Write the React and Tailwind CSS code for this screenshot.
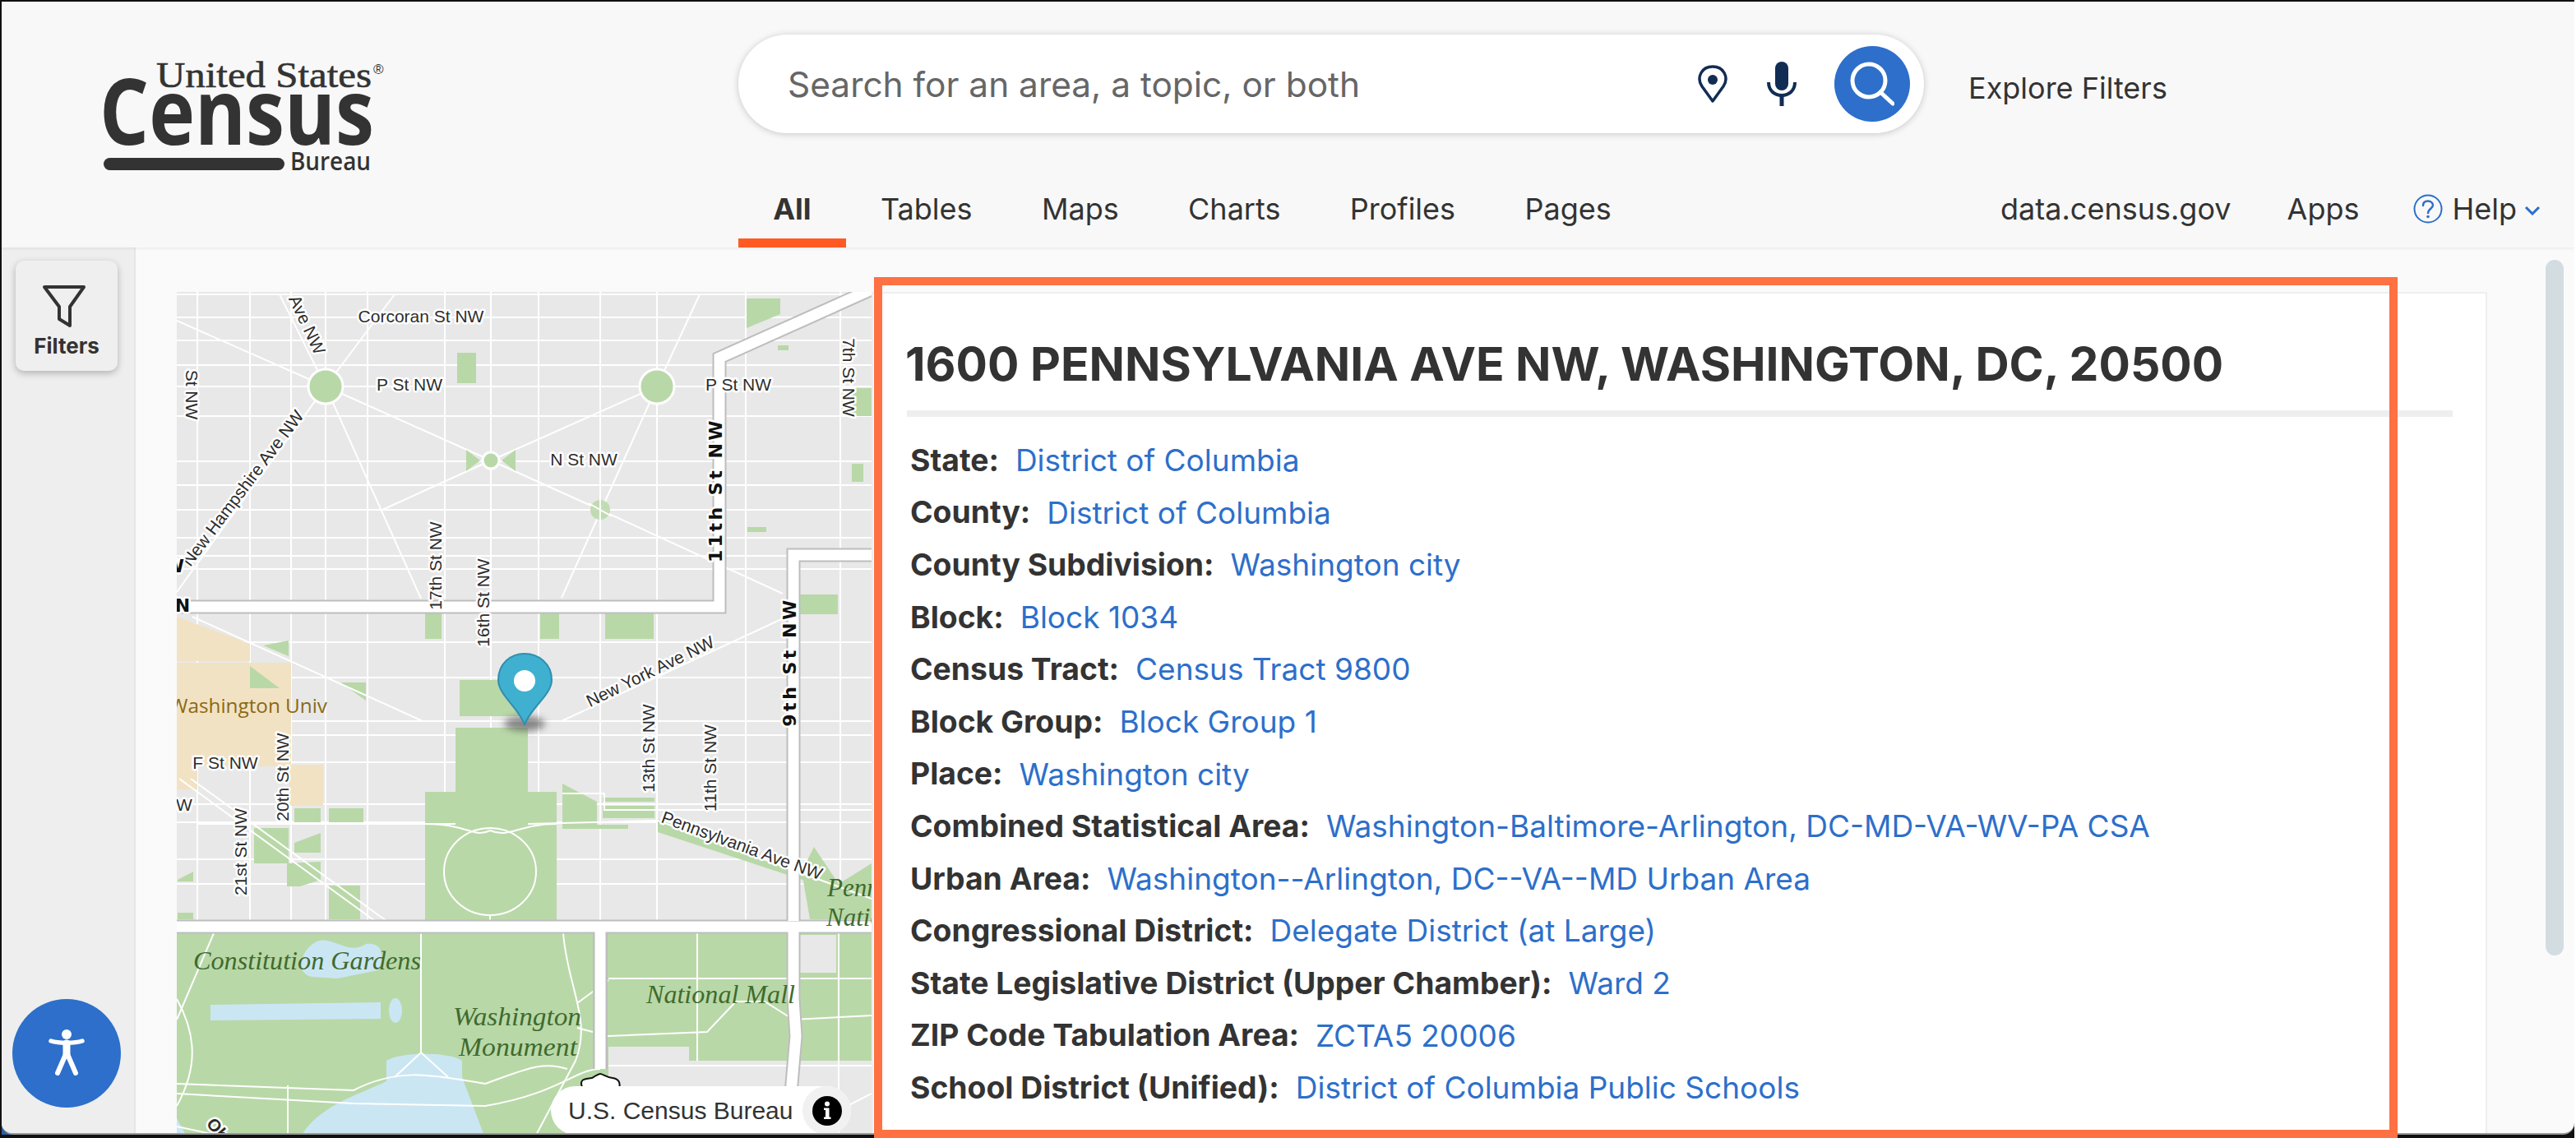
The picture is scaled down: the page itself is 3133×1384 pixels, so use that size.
import React from 'react'

const tabs = ['All', 'Tables', 'Maps', 'Charts', 'Profiles', 'Pages']

const geoRows = [
    ['State:', 'District of Columbia'],
    ['County:', 'District of Columbia'],
    ['County Subdivision:', 'Washington city'],
    ['Block:', 'Block 1034'],
    ['Census Tract:', 'Census Tract 9800'],
    ['Block Group:', 'Block Group 1'],
    ['Place:', 'Washington city'],
    ['Combined Statistical Area:', 'Washington-Baltimore-Arlington, DC-MD-VA-WV-PA CSA'],
    ['Urban Area:', 'Washington--Arlington, DC--VA--MD Urban Area'],
    ['Congressional District:', 'Delegate District (at Large)'],
    ['State Legislative District (Upper Chamber):', 'Ward 2'],
    ['ZIP Code Tabulation Area:', 'ZCTA5 20006'],
    ['School District (Unified):', 'District of Columbia Public Schools'],
]

const Logo = () => (
    <svg width="360" height="145" viewBox="120 70 360 145" className="block">
        <text x="190" y="106" fontFamily="Liberation Serif" fontSize="45" fill="#333" stroke="#333" strokeWidth="0.6" textLength="262" lengthAdjust="spacingAndGlyphs">United States</text>
        <text x="454" y="90" fontFamily="Liberation Sans" fontSize="17" fill="#333">®</text>
        <text x="121" y="176" fontFamily="Open Sans" fontWeight="700" fontSize="112" fill="#333" textLength="334" lengthAdjust="spacingAndGlyphs">Census</text>
        <rect x="126" y="192" width="220" height="15" rx="7.5" fill="#333" />
        <text x="353" y="207" fontFamily="Open Sans" fontWeight="600" fontSize="30" fill="#333" textLength="98" lengthAdjust="spacingAndGlyphs">Bureau</text>
    </svg>
)

const hLines = [358, 386, 414, 444, 470, 506, 561, 590, 620, 654, 676, 692, 781, 824, 877, 894, 927, 978, 1000, 1045, 1075]
const vLines = [240, 304, 354, 396, 447, 541, 597, 655, 730, 799, 907, 1022]

const thinRoads = [
    'M215 390L396 470L597 560L730 620L952 722',
    'M799 470L597 560L465 620',
    'M396 470L512 728',
    'M799 470L683 727',
    'M799 470L851 358',
    'M396 470L480 358',
    'M396 470L340 358',
    'M396 470L215 720',
    'M234 750L514 877H683L957 750',
    'M218 947L456 1120',
    'M232 947L470 1120',
    'M642 1002L800 998L1060 1093',
    'M240 1002H554',
    'M517 1002C570 1002 576 1020 596 1010C620 1020 630 1002 677 1002',
    'M684 965H735V985H1060',
    'M215 1215C240 1260 240 1300 215 1345',
    'M215 1318L430 1326C480 1300 520 1305 590 1318C640 1300 660 1290 690 1300',
    'M260 1135L215 1240',
    'M215 1330L430 1342L590 1345C680 1330 700 1300 730 1300',
    'M512 1135V1280L480 1310',
    'M512 1280L545 1310',
    'M350 1320V1384',
    'M215 1370L280 1384',
    'M685 1135C690 1200 720 1240 700 1290L650 1384',
    'M740 1192L702 1220',
    'M702 1250L740 1260',
    'M740 1190H1060',
    'M740 1260L860 1255L895 1218H930L965 1240L1060 1235',
    'M848 1135V1290',
    'M740 1296H1060',
    'M1020 1135V1384',
    'M955 1384L1060 1330',
]

const mapLabels = [
    ['Corcoran St NW', 512, 392, 0],
    ['Ave NW', 367, 398, 65],
    ['P St NW', 498, 475, 0],
    ['P St NW', 898, 475, 0],
    ['N St NW', 710, 566, 0],
    ['7th St NW', 1025, 459, 90],
    ['St NW', 226, 480, 90],
    ['New Hampshire Ave NW', 301, 598, -53],
    ['New York Ave NW', 794, 823, -26],
    ['17th St NW', 537, 688, -90],
    ['16th St NW', 595, 733, -90],
    ['13th St NW', 796, 910, -90],
    ['11th St NW', 871, 934, -90],
    ['F St NW', 274, 935, 0],
    ['20th St NW', 351, 945, -90],
    ['21st St NW', 300, 1036, -90],
    ['Pennsylvania Ave NW', 900, 1035, 20],
]

const highways = [
    'M215 738H875V435L1100 334',
    'M1060 675H965V1120',
    'M215 1127H1060',
    'M965 1127V1215L968 1260L962 1330',
]

const MapPanel = () => (
    <svg width="845" height="1029" viewBox="215 355 845 1029" className="block">
        <defs>
            <filter id="pin-shadow" x="-50%" y="-100%" width="200%" height="300%">
                <feGaussianBlur stdDeviation="4" />
            </filter>
        </defs>
        <rect x="215" y="355" width="845" height="1029" fill="#e8e8e8" />
        {/* street grid goes under the parks */}
        <g stroke="#fff" strokeWidth="2" fill="none">
            {hLines.map((y) => (
                <path key={y} d={`M215 ${y}H1060`} />
            ))}
            {vLines.map((x) => (
                <path key={x} d={`M${x} 355V1120`} />
            ))}
        </g>
        {/* campus */}
        <path d="M215 750L304 783V804H215Z" fill="#f2e2c4" />
        <path d="M215 806H354V930H393V980H352V932H240V960H215Z" fill="#f2e2c4" />
        {/* parks */}
        <g fill="#b9d8a8">
            <path d="M908 363H949V382L908 399Z" />
            <rect x="556" y="429" width="23" height="37" />
            <rect x="517" y="745" width="20" height="32" />
            <rect x="657" y="745" width="23" height="32" />
            <rect x="736" y="745" width="59" height="32" />
            <rect x="972" y="723" width="47" height="24" />
            <rect x="559" y="827" width="80" height="44" />
            <rect x="1035" y="472" width="25" height="34" />
            <rect x="1036" y="564" width="14" height="22" />
            <rect x="909" y="641" width="23" height="6" />
            <rect x="946" y="420" width="13" height="6" />
            <path d="M554 885H642V963H677V1120H517V963H554Z" />
            <path d="M684 953L726 975V1003H684Z" />
            <rect x="733" y="970" width="63" height="5" />
            <rect x="733" y="980" width="63" height="15" />
            <rect x="684" y="1003" width="80" height="5" />
            <rect x="358" y="983" width="32" height="17" />
            <rect x="400" y="983" width="42" height="17" />
            <path d="M309 1007H351V1050H309Z" />
            <path d="M358 1037V1025L390 1013V1037Z" />
            <path d="M349 1050L390 1048V1070L365 1078H349Z" />
            <rect x="400" y="1077" width="38" height="41" />
            <rect x="216" y="1110" width="19" height="8" />
            <path d="M216 1070L235 1060V1072H216Z" />
            <path d="M320 785L351 779V798Z" />
            <path d="M304 810L340 837H304Z" />
            <path d="M414 830H445V852Z" />
            <path d="M800 996L1000 1070L985 1073L800 1012Z" />
            <path d="M975 1060L990 1030L1000 1045L1020 1075L1060 1050V1118H985Z" />
            <path d="M215 1135H1060V1384H215Z" />
        </g>
        {/* gray blocks south of the mall */}
        <g fill="#e8e8e8">
            <rect x="972" y="1137" width="45" height="46" />
            <path d="M740 1273H838V1290H1060V1384H740Z" />
        </g>
        {/* water */}
        <g fill="#cbe6f3">
            <path d="M378 1150C400 1130 420 1165 445 1148C470 1145 465 1170 460 1180L410 1190L380 1188C360 1185 365 1160 378 1150Z" />
            <path d="M256 1222L463 1219V1239L256 1241Z" />
            <ellipse cx="481" cy="1229" rx="8" ry="15" />
            <path d="M470 1290C490 1278 550 1280 562 1290V1310L590 1384H365C385 1345 440 1330 470 1315Z" />
            <path d="M215 1360L228 1384H215Z" />
        </g>
        {/* diagonal avenues and paths */}
        <g stroke="#fff" strokeWidth="2" fill="none">
            {thinRoads.map((d) => (
                <path key={d} d={d} />
            ))}
            <ellipse cx="596" cy="1060" rx="56" ry="53" />
            <path d="M596 1113V1120" />
        </g>
        {/* circles */}
        <g fill="#b9d8a8" stroke="#fff" strokeWidth="3">
            <circle cx="396" cy="470" r="21" />
            <circle cx="799" cy="470" r="21" />
            <circle cx="597" cy="560" r="10" />
        </g>
        <path d="M567 547V573L584 560ZM627 547V573L610 560Z" fill="#b9d8a8" />
        <circle cx="730" cy="620" r="12" fill="#b9d8a8" fillOpacity="0.85" />
        <path d="M716 612L744 628M730 608V632" stroke="#fff" strokeWidth="2" />
        {/* highways */}
        <g fill="none" stroke="#bdbdbd" strokeWidth="17">
            {highways.map((d) => (
                <path key={d} d={d} />
            ))}
        </g>
        <path d="M730 1127V1300" stroke="#bdbdbd" strokeWidth="18" fill="none" />
        <g fill="none" stroke="#fff" strokeWidth="13">
            {highways.map((d) => (
                <path key={d} d={d} />
            ))}
            <path d="M730 1127V1300" />
        </g>
        {/* road labels */}
        <g fontFamily="Liberation Sans" fontSize="21" fill="#2d2d2d" stroke="#fff" strokeWidth="5" paintOrder="stroke" textAnchor="middle" strokeLinejoin="round">
            {mapLabels.map(([text, x, y, rot]) => (
                <text key={text + x} x={x} y={y} transform={`rotate(${rot} ${x} ${y})`}>
                    {text}
                </text>
            ))}
            <text x="224" y="986">W</text>
            <text x="250" y="1367" fontWeight="700" transform="rotate(50 250 1367)" textAnchor="start">Ohio Dr</text>
        </g>
        <g fontFamily="DejaVu Sans" fontWeight="700" fill="#111" stroke="#fff" strokeWidth="5" paintOrder="stroke" textAnchor="middle" strokeLinejoin="round" fontSize="22">
            <text x="878" y="596" letterSpacing="3.5" transform="rotate(-90 878 596)">11th St NW</text>
            <text x="968" y="805" letterSpacing="3.5" transform="rotate(-90 968 805)">9th St NW</text>
            <text x="222" y="744">N</text>
            <text x="212" y="696">W</text>
        </g>
        <text x="206" y="867" fontFamily="Open Sans" fontSize="24" fill="#8a6914" textLength="192" lengthAdjust="spacingAndGlyphs">Washington Univ</text>
        {/* park labels */}
        <g fontFamily="Liberation Serif" fontStyle="italic" fill="#3f6b2d" fontSize="31">
            <text x="235" y="1179" textLength="277" lengthAdjust="spacingAndGlyphs">Constitution Gardens</text>
            <text x="551" y="1247" textLength="156" lengthAdjust="spacingAndGlyphs">Washington</text>
            <text x="558" y="1284" textLength="144" lengthAdjust="spacingAndGlyphs">Monument</text>
            <text x="786" y="1220" textLength="181" lengthAdjust="spacingAndGlyphs">National Mall</text>
            <text x="1006" y="1090">Penn</text>
            <text x="1005" y="1126">Natio</text>
        </g>
        {/* route shield */}
        <path d="M708 1322C704 1312 712 1312 720 1311C725 1308 728 1306 730 1306C733 1306 737 1310 745 1311C752 1312 755 1316 753 1324V1330H708Z" fill="#fff" stroke="#111" strokeWidth="2" />
        {/* pin */}
        <ellipse cx="638" cy="880" rx="25" ry="9" fill="#444" opacity="0.6" filter="url(#pin-shadow)" />
        <path d="M638 881C630 860 606 845 606 827C606 807 621 795 638 795C655 795 671 807 671 827C671 845 646 860 638 881Z" fill="#40b0d0" stroke="#2f8fae" strokeWidth="2" />
        <ellipse cx="638" cy="828" rx="13" ry="13" fill="#fff" />
    </svg>
)

const App = () => {
    return (
        <div className="relative w-[3133px] h-[1384px] overflow-hidden bg-[#111] pt-[2px] pb-[4px] pl-[2px] border-r-[2px] border-white font-['Inter',sans-serif] text-[#333]">
            {/* dock peeking behind the window corner */}
            <div className="absolute bottom-[4px] left-[2px] h-[22px] w-[44px] bg-[#2d5f9e]" />
            <div className="relative flex flex-col h-full rounded-b-[14px] overflow-hidden border-b-[2px] border-[#999] bg-[#fafafa]">
                {/* header */}
                <header className="relative z-10 flex h-[299px] shrink-0 bg-[#f8f8f8] shadow-[0_1px_4px_rgba(0,0,0,0.08)]">
                    <div className="w-[896px] shrink-0 pl-[118px] pt-[68px]">
                        <Logo />
                    </div>
                    <div className="flex flex-1 flex-col">
                        <div className="flex items-center pt-[40px]">
                            <div className="flex h-[120px] w-[1442px] items-center rounded-full bg-white pl-[60px] pr-[17px] shadow-[0_1px_8px_rgba(0,0,0,0.2)]">
                                <span className="mt-[1px] flex-1 text-[42.4px] text-[#666]">Search for an area, a topic, or both</span>
                                <svg width="36" height="46" viewBox="0 0 36 46" fill="none" stroke="#122d54" strokeWidth="3.5" className="mr-[48px]">
                                    <path d="M18 44L5 26C1 20 1.5 14 4 9.500C7 4 12 2 18 2C24 2 29 4 32 9.500C34.500 14 35 20 31 26Z" strokeLinejoin="round" />
                                    <circle cx="18" cy="18" r="6" fill="#122d54" stroke="none" />
                                </svg>
                                <svg width="36" height="54" viewBox="0 0 36 54" fill="none" className="mr-[46px]">
                                    <rect x="10" y="0" width="16" height="35" rx="8" fill="#122d54" />
                                    <path d="M2 25C2 35 9 41 18 41C27 41 34 35 34 25" stroke="#122d54" strokeWidth="4" />
                                    <rect x="15.500" y="41" width="5" height="13" fill="#122d54" />
                                </svg>
                                <div className="flex h-[92px] w-[92px] items-center justify-center rounded-full bg-[#2d6fca]">
                                    <svg width="54" height="54" viewBox="0 0 54 54" fill="none" stroke="#fff" strokeWidth="5" strokeLinecap="round">
                                        <circle cx="23" cy="23" r="20" />
                                        <path d="M37 37L52 51" />
                                    </svg>
                                </div>
                            </div>
                            <span className="ml-[54px] mt-[9px] text-[36px]">Explore Filters</span>
                        </div>
                        <nav className="mt-auto flex items-end">
                            {tabs.map((tab, i) => (
                                <a
                                    key={tab}
                                    className={`h-[72px] border-b-[11px] px-[42.2px] pt-[3px] text-[36px] leading-[44px] ${i === 0 ? 'border-[#ff5a24] font-bold' : 'border-transparent'}`}
                                >
                                    {tab}
                                </a>
                            ))}
                            <div className="ml-auto flex h-[72px] gap-[68px] pr-[41px] pt-[3px] text-[36px] leading-[44px]">
                                <span>data.census.gov</span>
                                <span>Apps</span>
                                <span className="-ml-[2px] flex h-[44px] items-center">
                                    <svg width="36" height="36" viewBox="0 0 36 36" fill="none" className="mr-[11px]">
                                        <circle cx="18" cy="18" r="16.500" stroke="#2d6fca" strokeWidth="2" />
                                        <path d="M12 14C12 10 15 8.500 18 8.500C21 8.500 24 10.500 24 13.500C24 17.500 18 18 18 23" stroke="#2d6fca" strokeWidth="2.500" strokeLinecap="round" />
                                        <circle cx="18" cy="27.500" r="1.800" fill="#2d6fca" />
                                    </svg>
                                    Help
                                    <svg width="20" height="12" viewBox="0 0 20 12" fill="none" stroke="#2d6fca" strokeWidth="3" className="ml-[9px] mt-[4px]">
                                        <path d="M2 2L10 10L18 2" />
                                    </svg>
                                </span>
                            </div>
                        </nav>
                    </div>
                </header>

                {/* body */}
                <div className="relative flex min-h-0 flex-1">
                    <aside className="w-[163px] shrink-0 border-r-[2px] border-[#e6e6e6] bg-[#eeeeee] pl-[17px] pt-[16px]">
                        <div className="flex h-[134px] w-[124px] flex-col items-center rounded-[10px] bg-[#efefef] pt-[29px] shadow-[0_3px_8px_rgba(0,0,0,0.25)]">
                            <svg width="54" height="52" viewBox="0 0 54 52" fill="none" stroke="#333" strokeWidth="4" strokeLinejoin="round" className="-ml-[8px]">
                                <path d="M4 3H52L35 27V50L22 42V27Z" />
                            </svg>
                            <span className="mt-[8px] text-[26px] font-bold leading-[30px]">Filters</span>
                        </div>
                    </aside>

                    <main className="flex min-w-0 flex-1 pl-[50px] pt-[54px]">
                        <div className="relative h-[1029px] w-[845px] shrink-0 overflow-hidden">
                            <MapPanel />
                            <div className="absolute left-[455px] top-[966px] flex h-[59px] w-[365px] items-center rounded-full bg-white pl-[21px] text-[#333]">
                                <span className="font-['Liberation_Sans',sans-serif] text-[30px]">U.S. Census Bureau</span>
                                <span className="absolute right-0 top-0 flex h-[59px] w-[59px] items-center justify-center rounded-full bg-[#f1f1f1]">
                                    <svg width="36" height="36" viewBox="0 0 36 36">
                                        <circle cx="18" cy="18" r="18" fill="#000" />
                                        <circle cx="18" cy="9.500" r="3" fill="#fff" />
                                        <path d="M14 14.500H20.500V25.500H22.500V28H14V25.500H16V17H14Z" fill="#fff" />
                                    </svg>
                                </span>
                            </div>
                        </div>
                        <section className="mb-[-40px] h-[1100px] w-[1965px] shrink-0 border-[2px] border-[#eeeeee] bg-white pl-[39px] pr-[40px] pt-[52px]">
                            <h1 className="whitespace-nowrap text-[57px] font-bold leading-[68px] text-[#333]">1600 PENNSYLVANIA AVE NW, WASHINGTON, DC, 20500</h1>
                            <div className="ml-[2px] mt-[22px] h-[8px] bg-[#eeeeee]" />
                            <div className="mt-[21px] flex flex-col pl-[6px]">
                                {geoRows.map(([label, value]) => (
                                    <div key={label} className="flex h-[63.600px] items-center gap-[20px] text-[37px]">
                                        <span className="text-[37.300px] font-bold">{label}</span>
                                        <a className="text-[#2d6fca]">{value}</a>
                                    </div>
                                ))}
                            </div>
                        </section>
                    </main>

                    {/* scrollbar */}
                    <div className="absolute right-[13px] top-[15px] h-[846px] w-[22px] rounded-full bg-[#d3dde1]" />
                    {/* floating accessibility button */}
                    <div className="absolute bottom-[31px] left-[13px] flex h-[132px] w-[132px] items-center justify-center rounded-full bg-[#2d6fca]">
                        <svg width="44" height="58" viewBox="0 0 44 58" fill="none" stroke="#fff" strokeLinecap="round" strokeLinejoin="round">
                            <circle cx="22" cy="6" r="6" fill="#fff" stroke="none" />
                            <path d="M3 14C12 17 32 17 41 14" strokeWidth="5.500" />
                            <path d="M22 17V30" strokeWidth="9" />
                            <path d="M21 30L11 53M23 30L33 53" strokeWidth="6" />
                        </svg>
                    </div>
                </div>
            </div>

            {/* highlight box */}
            <div className="absolute left-[1063px] top-[337px] h-[1047px] w-[1853px] border-[10px] border-[#ff7043]" />
        </div>
    )
}

export default App
